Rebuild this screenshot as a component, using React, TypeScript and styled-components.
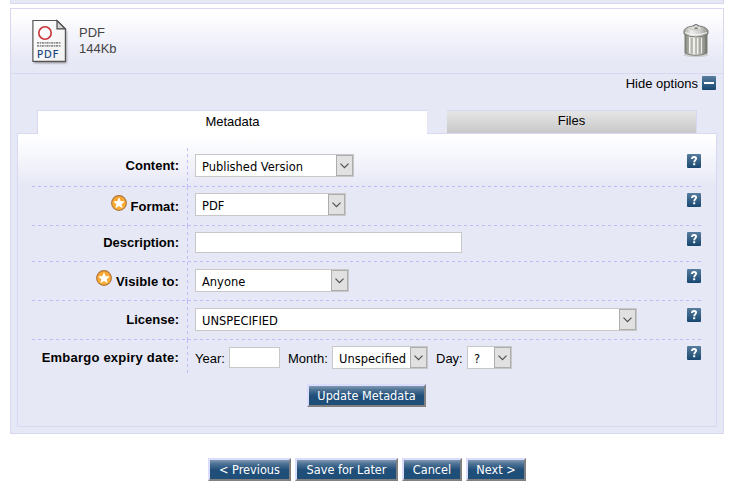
import React from 'react';
import styled, { createGlobalStyle } from 'styled-components';

const Global = createGlobalStyle`
  * { box-sizing: border-box; }
  body { margin: 0; background: #fff; color: #000; font: 13px/15px "Liberation Sans", Arial, sans-serif; overflow: hidden; }
`;

const tahoma = `"DejaVu Sans Condensed", "DejaVu Sans", Tahoma, sans-serif`;
const edge = '#d8d8f0';
const fill = '#e6e8f5';
const dash = '#bebeff';

const Page = styled.div`
  width: 735px;
  height: 495px;
  padding: 0 11px 0 10px;
`;
const PreviousPanel = styled.div`
  height: 4px;
  background: ${fill};
  border: solid ${edge};
  border-width: 0 1px 1px;
`;
const Panel = styled.section`
  height: 426px;
  margin-top: 4px;
  border: 1px solid ${edge};
  background: ${fill};
`;
const DocumentHeader = styled.header`
  display: flex;
  height: 65px;
  padding: 10px 13px 0 20px;
  border-bottom: 1px solid ${edge};
  background: linear-gradient(#fff 0, #fdfdff 10px, #f1f2fa 30px, ${fill} 52px);
`;
const DocumentInfo = styled.div`
  flex: 1;
  margin: 6px 0 0 9px;
  line-height: 16px;
  color: #444;
`;
const OptionsToggle = styled.div`
  display: flex;
  justify-content: flex-end;
  gap: 4px;
  height: 36px;
  padding: 2px 7px 0 0;
`;
const Tabs = styled.nav`
  display: flex;
  gap: 20px;
  margin-left: 26px;
`;
const Tab = styled.div<{ $active?: boolean }>`
  position: relative;
  width: ${p => (p.$active ? 390 : 250)}px;
  height: ${p => (p.$active ? 24 : 23)}px;
  margin-bottom: ${p => (p.$active ? -1 : 0)}px;
  padding-top: ${p => (p.$active ? 3 : 2)}px;
  text-align: center;
  border: solid ${edge};
  border-width: ${p => (p.$active ? '1px 0 0 1px' : '1px 1px 0 0')};
  background: ${p => (p.$active ? '#fff' : 'linear-gradient(#e6e6e6, #c8c8c8)')};
`;
const TabPanel = styled.div`
  width: 700px;
  height: 294px;
  margin-left: 6px;
  padding: 14px 14px 0;
  border: 1px solid ${edge};
  background: linear-gradient(#fff 0, #fdfdff 8px, #f2f3fa 30px, ${fill} 52px);
`;
const FieldRow = styled.div<{ $height: number; $last?: boolean }>`
  display: grid;
  grid-template-columns: 155px 1fr 15px;
  height: ${p => p.$height}px;
  background: ${p => (p.$last ? 'none' : `repeating-linear-gradient(90deg, ${dash} 0 3px, transparent 3px 6px) bottom / 100% 1px no-repeat`)};
`;
const FieldLabel = styled.label<{ $top: number; $spacing?: number }>`
  display: flex;
  justify-content: flex-end;
  gap: 4px;
  padding: ${p => p.$top}px 8px 0 0;
  font-weight: bold;
  letter-spacing: ${p => p.$spacing ?? 0}px;
  white-space: nowrap;
`;
const FieldControl = styled.div<{ $top: number }>`
  display: flex;
  align-items: flex-start;
  padding: ${p => p.$top}px 0 0 8px;
  background: repeating-linear-gradient(${dash} 0 3px, transparent 3px 6px) left / 1px 100% no-repeat;
`;
const HelpCell = styled.div<{ $top: number }>`
  padding-top: ${p => p.$top}px;
`;
const SelectBox = styled.div<{ $width: number }>`
  display: flex;
  width: ${p => p.$width}px;
  height: 23px;
  border: 1px solid #c8c8c8;
  background: #fff;
  font: 12.75px/23px ${tahoma};
`;
const SelectText = styled.span`
  flex: 1;
  padding-left: 6px;
  white-space: nowrap;
`;
const SelectArrow = styled.span`
  display: flex;
  align-items: center;
  justify-content: center;
  width: 17px;
  height: 21px;
  border: 1px solid #adadad;
  background: #e1e1e1;
`;
const TextInput = styled.input<{ $width: number }>`
  width: ${p => p.$width}px;
  height: 21px;
  padding: 0 4px;
  border: 1px solid #c8c8c8;
  border-radius: 0;
  background: #fff;
`;
const DatePart = styled.label<{ $labelWidth: number; $raised?: boolean }>`
  display: grid;
  grid-template-columns: ${p => p.$labelWidth}px auto;
  align-items: start;
  padding-top: ${p => (p.$raised ? 0 : 1)}px;
  margin-right: 8px;
`;
const DateCaption = styled.span<{ $top: number }>`
  padding-top: ${p => p.$top}px;
`;
const Buttons = styled.div<{ $top: number; $left: number }>`
  display: flex;
  gap: 4px;
  padding: ${p => p.$top}px 0 0 ${p => p.$left}px;
`;
const Button = styled.button<{ $width: number }>`
  width: ${p => p.$width}px;
  height: 23px;
  padding: 1px 0 0;
  border: 2px solid;
  border-color: #dcdcfc #808080 #808080 #dcdcfc;
  border-radius: 0;
  background: linear-gradient(#8099b3 0, #4c7193 4px, #1f4e79 10px, #1f4e79 100%);
  color: #fff;
  font: 12.6px/18px ${tahoma};
  white-space: nowrap;
`;
const Icon = styled.svg`
  display: block;
  flex: none;
`;
const RequiredIcon = styled(Icon)`
  margin: -4px 0 0 -1px;
`;
const TrashIcon = styled(Icon)`
  margin-top: 3px;
`;

const Select = ({ width, children }: { width: number; children: string }) => (
  <SelectBox $width={width}>
    <SelectText>{children}</SelectText>
    <SelectArrow>
      <Icon width="9" height="6" viewBox="0 0 9 6"><path d="M.5.7 4.5 4.7 8.5.7" fill="none" stroke="#505050" strokeWidth="1.2" /></Icon>
    </SelectArrow>
  </SelectBox>
);

const Star = () => (
  <RequiredIcon width="16" height="16" viewBox="0 0 16 16">
    <defs><linearGradient id="orange" x2="0" y2="1"><stop stopColor="#f7a531" /><stop offset="1" stopColor="#fbb034" /></linearGradient></defs>
    <circle cx="8" cy="8" r="7.4" fill="url(#orange)" stroke="#b1763c" strokeWidth="1.1" />
    <path d="m8 2.3 1.65 3.75 4.05.4-3.05 2.7.9 4L8 11.05l-3.55 2.1.9-4L2.3 6.45l4.05-.4Z" fill="#fff" />
  </RequiredIcon>
);

const blueStops = <><stop stopColor="#577d9e" /><stop offset="1" stopColor="#174770" /></>;

const Help = () => (
  <Icon width="14" height="14" viewBox="0 0 14 14" aria-label="Help">
    <defs><linearGradient id="help" x2="0" y2="1">{blueStops}</linearGradient></defs>
    <rect width="14" height="14" rx="1" fill="url(#help)" />
    <path d="M5 4.9V4.3Q5.2 3 7.1 3T9.1 4.6Q9.1 5.6 8.2 6.2T7.2 8.4" fill="none" stroke="#fff" strokeWidth="1.9" />
    <path d="M6.1 9.3h2.1v1.9H6.1z" fill="#fff" />
  </Icon>
);

const Minus = () => (
  <Icon width="14" height="14" viewBox="0 0 14 14">
    <defs><linearGradient id="minus" x2="0" y2="1">{blueStops}</linearGradient></defs>
    <rect width="14" height="14" rx="1" fill="url(#minus)" />
    <path d="M2 6h10v2H2z" fill="#fff" />
  </Icon>
);

const PdfFile = () => (
  <Icon width="39" height="46" viewBox="0 0 39 46">
    <defs>
      <linearGradient id="paper" x2="1" y2="1"><stop stopColor="#fff" /><stop offset="1" stopColor="#f1f1f1" /></linearGradient>
      <filter id="shade" x="-20%" y="-20%" width="140%" height="140%"><feGaussianBlur stdDeviation=".8" /></filter>
    </defs>
    <path d="M3 3h23.5l9 9v32H3z" fill="#666" opacity=".8" filter="url(#shade)" />
    <path d="M1.9 1.5h24.1l8.4 8.4v32.4h-32.5z" fill="url(#paper)" stroke="#555" strokeWidth="1.2" />
    <path d="M26 1.7v8.2h8.2z" fill="#d4d4d4" stroke="#4b4b4b" strokeWidth="1.2" />
    <circle cx="14" cy="14" r="6.2" fill="none" stroke="#ca3438" strokeWidth="1.6" />
    <path d="M6 23.8h24M6 26.8h24" stroke="#8c8c8c" strokeWidth="1.7" strokeDasharray="2.2 .7 1.2 .6" />
    <text x="5.9" y="38.8" fill="#113f7c" stroke="#113f7c" strokeWidth=".15" fontFamily="DejaVu Sans" fontSize="10" textLength="21.5">PDF</text>
  </Icon>
);

const TrashCan = () => (
  <TrashIcon width="28" height="37" viewBox="0 0 28 37">
    <defs>
      <linearGradient id="metal"><stop stopColor="#777971" /><stop offset=".2" stopColor="#cacbc5" /><stop offset=".42" stopColor="#eeeeea" /><stop offset=".7" stopColor="#bbbcb6" /><stop offset="1" stopColor="#696b64" /></linearGradient>
      <linearGradient id="lid"><stop stopColor="#a5a7a0" /><stop offset=".3" stopColor="#ededeb" /><stop offset=".65" stopColor="#d0d1cd" /><stop offset="1" stopColor="#90928b" /></linearGradient>
    </defs>
    <ellipse cx="14" cy="33" rx="12.5" ry="2" fill="#bbb" opacity=".6" />
    <path d="M3 11h22v20.2Q14 35.5 3 31.2z" fill="url(#metal)" stroke="#7c7e77" strokeWidth="1" />
    <path d="M6 15v15.5M10 16v15.5M14 16v16M18 16v15.5M22 15v15.5" stroke="#989a92" strokeWidth="1.1" />
    <path d="M7.5 15v15.5M11.5 16v15.5M15.5 16v16M19.5 16v15.5" stroke="#f4f4f0" strokeWidth=".9" />
    <path d="M2 8.6C3 5.8 8 3.8 14 3.8S25 5.8 26 8.6v3.3Q21 15 14 15T2 11.9z" fill="url(#lid)" stroke="#777a72" strokeWidth="1" />
    <path d="M3 10.6Q14 14.5 25 10.6" fill="none" stroke="#f6f6f4" strokeWidth="1" />
    <path d="M8 7 11 4Q14 2 17 4l3 3Q14 9.5 8 7" fill="#e2e3df" stroke="#a7a9a3" strokeWidth=".5" />
    <path d="M11 4.4Q14 .6 17 4.4" fill="none" stroke="#777" strokeWidth="1.1" />
    <ellipse cx="14.2" cy="6.3" rx="2" ry="1" fill="#85877f" />
  </TrashIcon>
);

interface FieldProps {
  label: string;
  height: number;
  labelTop: number;
  top: number;
  required?: boolean;
  spacing?: number;
  last?: boolean;
  children: React.ReactNode;
}
const Field = ({ label, height, labelTop, top, required, spacing, last, children }: FieldProps) => (
  <FieldRow $height={height} $last={last}>
    <FieldLabel $top={labelTop} $spacing={spacing}>{required && <Star />}{label}</FieldLabel>
    <FieldControl $top={top}>{children}</FieldControl>
    <HelpCell $top={top}><Help /></HelpCell>
  </FieldRow>
);

export default function App() {
  return (
    <Page>
      <Global />
      <PreviousPanel />
      <Panel>
        <DocumentHeader>
          <PdfFile />
          <DocumentInfo>PDF<br />144Kb</DocumentInfo>
          <TrashCan />
        </DocumentHeader>
        <OptionsToggle><span>Hide options</span><Minus /></OptionsToggle>
        <Tabs>
          <Tab $active>Metadata</Tab>
          <Tab>Files</Tab>
        </Tabs>
        <TabPanel>
          <Field label="Content:" height={39} labelTop={10} top={6}><Select width={159}>Published Version</Select></Field>
          <Field label="Format:" height={39} labelTop={12} top={6} required><Select width={151}>PDF</Select></Field>
          <Field label="Description:" height={36} labelTop={9} top={6}><TextInput $width={267} /></Field>
          <Field label="Visible to:" height={39} labelTop={12} top={7} required spacing={0.1}><Select width={154}>Anyone</Select></Field>
          <Field label="License:" height={39} labelTop={11} top={7}><Select width={442}>UNSPECIFIED</Select></Field>
          <Field label="Embargo expiry date:" height={36} labelTop={10} top={6} spacing={0.22} last>
            <DatePart $labelWidth={34}><DateCaption $top={4}>Year:</DateCaption><TextInput $width={51} /></DatePart>
            <DatePart $labelWidth={44} $raised><DateCaption $top={5}>Month:</DateCaption><Select width={96}>Unspecified</Select></DatePart>
            <DatePart $labelWidth={31} $raised><DateCaption $top={5}>Day:</DateCaption><Select width={45}>?</Select></DatePart>
          </Field>
          <Buttons $top={8} $left={275}><Button $width={119}>Update Metadata</Button></Buttons>
        </TabPanel>
      </Panel>
      <Buttons $top={24} $left={198}>
        <Button $width={83}>&lt; Previous</Button>
        <Button $width={103}>Save for Later</Button>
        <Button $width={60}>Cancel</Button>
        <Button $width={60}>Next &gt;</Button>
      </Buttons>
    </Page>
  );
}
